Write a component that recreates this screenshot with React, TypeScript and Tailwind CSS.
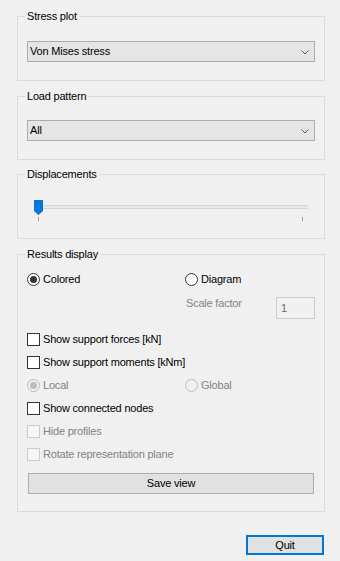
import React from "react"

const font = { fontFamily: '"Liberation Sans", Arial, sans-serif', letterSpacing: "-0.2px" }

function GroupBox({
  title,
  className,
  children,
}: {
  title: string
  className?: string
  children: React.ReactNode
}) {
  return (
    <fieldset className={`border border-[#dcdcdc] px-[9px] ${className ?? ""}`}>
      <legend className="-ml-[2px] px-[2px] h-[13px] leading-[13px] text-[11px] text-black">
        {title}
      </legend>
      {children}
    </fieldset>
  )
}

function Combo({ value, className }: { value: string; className?: string }) {
  return (
    <div
      className={`h-[21px] border border-[#adadad] bg-[#e5e5e5] flex items-center justify-between pl-[2px] pr-[5px] ${className ?? ""}`}
    >
      <span className="text-[11px] leading-[13px] text-black">{value}</span>
      <svg width="8" height="5" viewBox="0 0 8 5" className="mt-[1px]">
        <path d="M0.5 0.5 L4 4 L7.5 0.5" fill="none" stroke="#5a5a5a" strokeWidth="1" />
      </svg>
    </div>
  )
}

function Radio({
  label,
  checked,
  disabled,
}: {
  label: string
  checked?: boolean
  disabled?: boolean
}) {
  return (
    <div className="flex items-center h-[17px] gap-[3px]">
      <div
        className={`w-[13px] h-[13px] rounded-full border flex items-center justify-center ${
          disabled ? "border-[#bcbcbc] bg-[#f0f0f0]" : "border-[#333333] bg-white"
        }`}
      >
        {checked && (
          <div
            className={`w-[7px] h-[7px] rounded-full ${disabled ? "bg-[#bcbcbc]" : "bg-[#333333]"}`}
          />
        )}
      </div>
      <span className={`text-[11px] leading-[13px] ${disabled ? "text-[#838383]" : "text-black"}`}>
        {label}
      </span>
    </div>
  )
}

function Check({ label, disabled }: { label: string; disabled?: boolean }) {
  return (
    <div className="flex items-center h-[17px] gap-[3px]">
      <div
        className={`w-[13px] h-[13px] border ${
          disabled ? "border-[#cccccc] bg-[#f7f7f7]" : "border-[#333333] bg-white"
        }`}
      />
      <span className={`text-[11px] leading-[13px] ${disabled ? "text-[#838383]" : "text-black"}`}>
        {label}
      </span>
    </div>
  )
}

export default function App() {
  return (
    <div
      className="w-[340px] h-[561px] bg-[#f0f0f0] pl-[17px] pr-[15px] pt-[10px] flex flex-col"
      style={font}
    >
      <GroupBox title="Stress plot" className="pb-[18px]">
        <Combo value="Von Mises stress" className="mt-[18px]" />
      </GroupBox>

      <GroupBox title="Load pattern" className="mt-[9px] pb-[18px]">
        <Combo value="All" className="mt-[17px]" />
      </GroupBox>

      <GroupBox title="Displacements" className="mt-[8px] pb-[17px]">
        <div className="mt-[19px] pl-[7px] pr-[7px]">
          <div className="relative h-[21px]">
            <div className="absolute left-0 right-0 top-[5px] h-[4px] border-y border-[#d6d6d6] bg-[#e7eaea]" />
            <svg width="9" height="15" viewBox="0 0 9 15" className="absolute left-0 top-0">
              <path d="M0 0 H9 V11 L4.5 15 L0 11 Z" fill="#0078d7" />
            </svg>
            <div className="absolute left-[4px] top-[17px] w-[1px] h-[4px] bg-[#a0a0a0]" />
            <div className="absolute right-[5px] top-[17px] w-[1px] h-[4px] bg-[#a0a0a0]" />
          </div>
        </div>
      </GroupBox>

      <GroupBox title="Results display" className="mt-[9px] pb-[17px]">
        <div className="mt-[10px] grid grid-cols-[158px_1fr]">
          <Radio label="Colored" checked />
          <Radio label="Diagram" />
        </div>
        <div className="mt-[9px] flex items-start justify-between pl-[159px]">
          <span className="text-[11px] leading-[13px] text-[#838383]">Scale factor</span>
          <div className="w-[39px] h-[22px] border border-[#cccccc] bg-[#f0f0f0] flex items-center pl-[4px] text-[11px] text-[#6d6d6d]">
            1
          </div>
        </div>
        <div className="mt-[12px] flex flex-col gap-[6px]">
          <Check label="Show support forces [kN]" />
          <Check label="Show support moments [kNm]" />
          <div className="grid grid-cols-[158px_1fr]">
            <Radio label="Local" checked disabled />
            <Radio label="Global" disabled />
          </div>
          <Check label="Show connected nodes" />
          <Check label="Hide profiles" disabled />
          <Check label="Rotate representation plane" disabled />
        </div>
        <button className="mt-[10px] mx-[1px] w-[calc(100%-2px)] h-[21px] border border-[#adadad] bg-[#e1e1e1] text-[11px] leading-[13px] text-black">
          Save view
        </button>
      </GroupBox>

      <div className="mt-[23px] flex justify-end pr-[1px]">
        <button className="w-[78px] h-[20px] border-2 border-[#0078d7] bg-[#e1e1e1] text-[11px] leading-[13px] text-black">
          Quit
        </button>
      </div>
    </div>
  )
}
